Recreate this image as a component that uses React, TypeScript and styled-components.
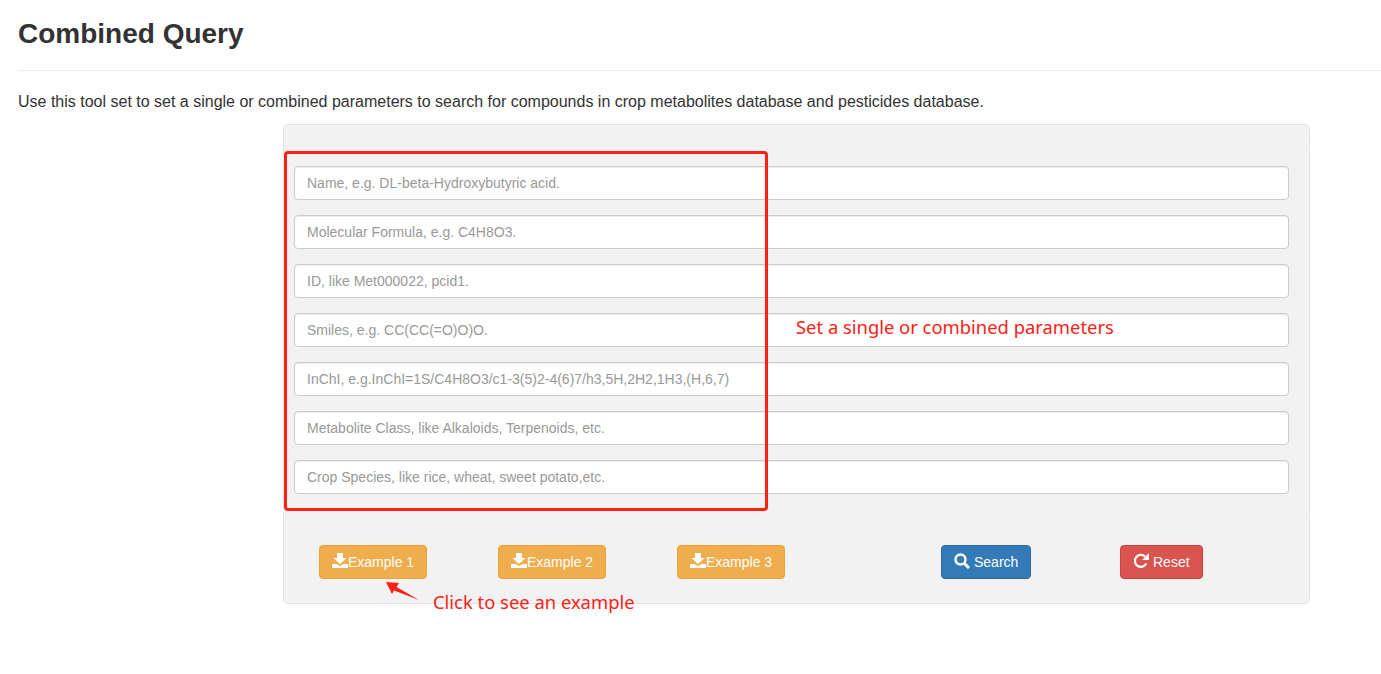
import React from 'react';
import styled, {createGlobalStyle} from 'styled-components';

const GlobalStyle = createGlobalStyle`
  html, body {
    margin: 0;
    padding: 0;
    background: #fff;
  }
  body {
    font-family: "Liberation Sans", Arial, sans-serif;
    font-size: 14px;
    line-height: 1.42857;
    color: #333;
  }
`;

const annotationRed = '#ff2016';

const Page = styled.div`
  height: 674px;
  padding-left: 18px;
  box-sizing: border-box;
  overflow: hidden;
`;

const Header = styled.div`
  height: 71px;
  box-sizing: border-box;
  border-bottom: 1px solid #eee;
  padding-top: 17px;
`;

const Title = styled.h1`
  margin: 0;
  font-size: 28px;
  line-height: 34px;
  font-weight: 700;
  color: #333;
`;

const Intro = styled.p`
  margin: 19px 0 11px;
  font-size: 16px;
  line-height: 23px;
  color: #333;
`;

const Panel = styled.section`
  position: relative;
  width: 1027px;
  margin-left: 265px;
  box-sizing: border-box;
  background: #f2f2f2;
  border: 1px solid #e3e3e3;
  border-radius: 5px;
`;

const PanelHeading = styled.div`
  height: 20px;
  border-bottom: 1px solid #eee;
`;

const PanelBody = styled.div`
  display: flex;
  flex-direction: column;
  gap: 15px;
  padding: 20px 20px 20px 10px;
  border-bottom: 1px solid #eee;
`;

const Input = styled.input`
  display: block;
  width: 100%;
  height: 34px;
  box-sizing: border-box;
  padding: 6px 12px;
  font-family: inherit;
  font-size: 14px;
  color: #555;
  background: #fff;
  border: 1px solid #ccc;
  border-radius: 4px;
  box-shadow: inset 0 1px 1px rgba(0, 0, 0, 0.075);

  &::placeholder {
    color: #999;
    opacity: 1;
  }
`;

const PanelFooter = styled.div`
  display: grid;
  grid-template-columns: 179px 179px 264px 179px auto;
  justify-items: start;
  height: 88px;
  box-sizing: border-box;
  padding: 30px 0 0 35px;
`;

const tones = {
  warning: {bg: '#f0ad4e', border: '#eea236'},
  primary: {bg: '#337ab7', border: '#2e6da4'},
  danger: {bg: '#d9534f', border: '#d43f3a'},
};

const Button = styled.button<{$tone: keyof typeof tones}>`
  display: inline-flex;
  align-items: center;
  height: 34px;
  box-sizing: border-box;
  padding: 0 12px;
  font-family: inherit;
  font-size: 14px;
  color: #fff;
  background: ${p => tones[p.$tone].bg};
  border: 1px solid ${p => tones[p.$tone].border};
  border-radius: 4px;
  white-space: nowrap;

  svg {
    display: block;
    flex: none;
    margin-top: -3px;
  }
`;

const RedBox = styled.div`
  position: absolute;
  left: 0;
  top: 26px;
  width: 484px;
  height: 360px;
  box-sizing: border-box;
  border: 3px solid ${annotationRed};
  border-radius: 4px;
  pointer-events: none;
`;

const Note = styled.span<{$left: number; $top: number}>`
  position: absolute;
  left: ${p => p.$left}px;
  top: ${p => p.$top}px;
  font-family: "Noto Sans", "Open Sans", sans-serif;
  font-size: 18.4px;
  line-height: 24px;
  color: ${annotationRed};
  white-space: nowrap;
`;

const Arrow = styled.svg`
  position: absolute;
  left: 100px;
  top: 455px;
`;

const DownloadIcon = () => (
  <svg width="16" height="15" viewBox="0 0 16 15" fill="#fff">
    <path d="M5 0h6v5h3.5L8 11 1.500 5H5z" />
    <path d="M0 11h4.500l3.500 2 3.500-2H16v4H0z" />
  </svg>
);

const SearchIcon = () => (
  <svg width="16" height="16" viewBox="0 0 16 16" fill="none" stroke="#fff" style={{marginRight: 4}}>
    <circle cx="6.500" cy="6.500" r="5" strokeWidth="2.400" />
    <path d="M10.300 10.300 15 15" strokeWidth="3" />
  </svg>
);

const RepeatIcon = () => (
  <svg width="16" height="16" viewBox="0 0 16 16" fill="none" style={{marginRight: 4}}>
    <path d="M13.300 10.500A6 6 0 1 1 12 3.500" stroke="#fff" strokeWidth="2.200" />
    <path d="M16 0v7H9z" fill="#fff" />
  </svg>
);

const fields = [
  'Name, e.g. DL-beta-Hydroxybutyric acid.',
  'Molecular Formula, e.g. C4H8O3.',
  'ID, like Met000022, pcid1.',
  'Smiles, e.g. CC(CC(=O)O)O.',
  'InChI, e.g.InChI=1S/C4H8O3/c1-3(5)2-4(6)7/h3,5H,2H2,1H3,(H,6,7)',
  'Metabolite Class, like Alkaloids, Terpenoids, etc.',
  'Crop Species, like rice, wheat, sweet potato,etc.',
];

export default function App() {
  return (
    <Page>
      <GlobalStyle />
      <Header>
        <Title>Combined Query</Title>
      </Header>
      <Intro>
        Use this tool set to set a single or combined parameters to search for compounds in crop metabolites database and pesticides database.
      </Intro>
      <Panel>
        <PanelHeading />
        <PanelBody>
          {fields.map(text => <Input key={text} type="text" placeholder={text} />)}
        </PanelBody>
        <PanelFooter>
          <Button $tone="warning"><DownloadIcon />Example 1</Button>
          <Button $tone="warning"><DownloadIcon />Example 2</Button>
          <Button $tone="warning"><DownloadIcon />Example 3</Button>
          <Button $tone="primary"><SearchIcon />Search</Button>
          <Button $tone="danger"><RepeatIcon />Reset</Button>
        </PanelFooter>
        <RedBox />
        <Note $left={512} $top={190}>Set a single or combined parameters</Note>
        <Note $left={149} $top={465}>Click to see an example</Note>
        <Arrow width="36" height="24" viewBox="0 0 36 24">
          <path d="M2 2 15 3 12.500 7 35 20 10 10.500 8 14z" fill={annotationRed} />
        </Arrow>
      </Panel>
    </Page>
  );
}
